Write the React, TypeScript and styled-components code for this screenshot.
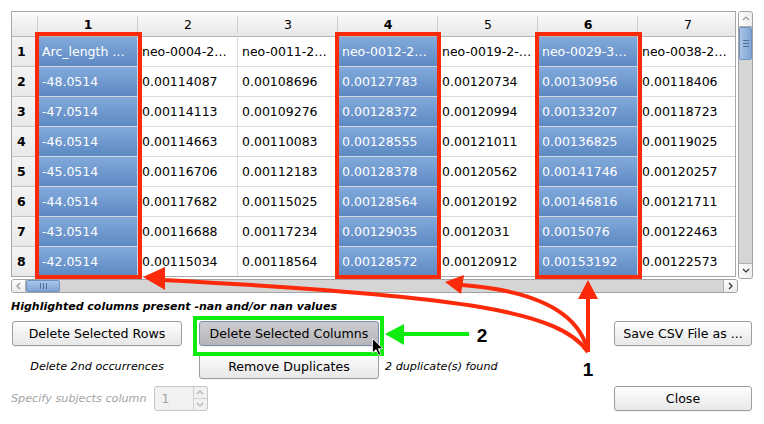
import React from "react";
import styled, { createGlobalStyle, css } from "styled-components";

const GlobalStyle = createGlobalStyle`
  html, body { margin: 0; padding: 0; background: #ffffff; }
  body { font-family: "DejaVu Sans", "Noto Sans", sans-serif; }
  * { box-sizing: border-box; }
`;

const Page = styled.div`
  position: relative;
  width: 764px;
  height: 424px;
  padding: 11px 0 0 11px;
  overflow: hidden;
  background: #ffffff;
  color: #000;
`;

const TableRow = styled.div`
  display: flex;
  align-items: flex-start;
  gap: 2px;
`;

const TableFrame = styled.div`
  width: 725px;
  height: 266px;
  border: 1px solid #a8a8a8;
  overflow: hidden;
  background: #fff;
`;

const Grid = styled.div`
  display: grid;
  grid-template-columns: 26px repeat(7, 100px);
  grid-template-rows: 25px repeat(8, 30px);
  width: 726px;
`;

const HeaderCell = styled.div<{ $bold?: boolean }>`
  position: relative;
  display: flex;
  align-items: center;
  justify-content: center;
  background: linear-gradient(#fbfbfb, #e7e7e7);
  border-bottom: 1px solid #b6b6b6;
  font-size: 12.5px;
  font-weight: ${(p) => (p.$bold ? 700 : 400)};
  &::after {
    content: "";
    position: absolute;
    right: 0;
    top: 4px;
    bottom: 3px;
    width: 1px;
    background: #cdcdcd;
  }
`;

const RowHead = styled.div`
  display: flex;
  align-items: center;
  padding-left: 5px;
  background: linear-gradient(#f3f3f3, #e9e9e9);
  border-bottom: 1px solid #c4c4c4;
  border-right: 1px solid #b6b6b6;
  font-size: 12.5px;
  font-weight: 700;
`;

const Cell = styled.div<{ $sel?: boolean }>`
  display: flex;
  align-items: center;
  padding: 0 4px;
  white-space: nowrap;
  overflow: hidden;
  font-size: 12.5px;
  color: #000;
  border-right: 1px solid #dcdcdc;
  border-bottom: 1px solid #dcdcdc;
  ${(p) =>
    p.$sel &&
    css`
      background: linear-gradient(#82aadb, #5d88c2);
      color: #ffffff;
      border-bottom-color: #cfd6e0;
      border-right-color: #cfd6e0;
    `}
`;

const VScroll = styled.div`
  width: 15px;
  height: 268px;
  display: flex;
  flex-direction: column;
  border: 1px solid #a3a3a3;
  border-radius: 3px;
  background: #d5d5d5;
  overflow: hidden;
`;

const HScroll = styled.div`
  width: 727px;
  height: 14px;
  display: flex;
  border: 1px solid #a3a3a3;
  border-radius: 3px;
  background: #d5d5d5;
  overflow: hidden;
`;

const ArrowBtn = styled.div<{ $horizontal?: boolean; $end?: boolean }>`
  flex: 0 0 ${(p) => (p.$horizontal ? "14px" : "15px")};
  display: flex;
  align-items: center;
  justify-content: center;
  background: ${(p) =>
    p.$horizontal ? "linear-gradient(#fdfdfd, #ececec)" : "linear-gradient(to right, #fdfdfd, #ececec)"};
  ${(p) =>
    p.$horizontal
      ? p.$end
        ? "border-left: 1px solid #b0b0b0;"
        : "border-right: 1px solid #b0b0b0;"
      : p.$end
      ? "border-top: 1px solid #b0b0b0;"
      : "border-bottom: 1px solid #b0b0b0;"}
`;

const Thumb = styled.div<{ $horizontal?: boolean }>`
  flex: 0 0 ${(p) => (p.$horizontal ? "34px" : "33px")};
  display: flex;
  flex-direction: ${(p) => (p.$horizontal ? "row" : "column")};
  align-items: center;
  justify-content: center;
  gap: 2px;
  background: ${(p) =>
    p.$horizontal ? "linear-gradient(#a9c4e7, #7ea4d5)" : "linear-gradient(to right, #a9c4e7, #7ea4d5)"};
  border: 1px solid #7093c2;
  border-radius: 2px;
`;

const Grip = styled.span<{ $horizontal?: boolean }>`
  display: block;
  background: #4f6f9c;
  width: ${(p) => (p.$horizontal ? "1px" : "6px")};
  height: ${(p) => (p.$horizontal ? "6px" : "1px")};
`;

const Track = styled.div`
  flex: 1;
`;

const Note = styled.div`
  margin-top: 7px;
  height: 14px;
  line-height: 14px;
  font-size: 11px;
  font-weight: 700;
  font-style: italic;
  white-space: nowrap;
`;

const Controls = styled.div`
  margin-top: 7px;
  padding-left: 1px;
  display: grid;
  grid-template-columns: 170px 17px 180px 1fr 138px;
  grid-template-rows: 25px 26px 25px;
  row-gap: 7px;
  width: 741px;
`;

const Button = styled.button<{ $pressed?: boolean; $col: number; $row: number }>`
  grid-column: ${(p) => p.$col};
  grid-row: ${(p) => p.$row};
  display: flex;
  align-items: center;
  justify-content: center;
  padding: 0;
  font-family: inherit;
  font-size: 12.6px;
  color: #000;
  border: 1px solid #9d9d9d;
  border-radius: 3px;
  background: linear-gradient(#fefefe, #e7e7e7);
  box-shadow: 0 1px 0 rgba(0, 0, 0, 0.06);
  ${(p) =>
    p.$pressed &&
    css`
      background: linear-gradient(#cdcdd1, #b6b6ba);
      border-color: #7b8eae;
    `}
`;

const InfoText = styled.div<{ $col: number; $row: number; $align?: string; $pad?: number }>`
  grid-column: ${(p) => p.$col};
  grid-row: ${(p) => p.$row};
  display: flex;
  align-items: center;
  justify-content: ${(p) => p.$align || "flex-start"};
  padding-left: ${(p) => p.$pad || 0}px;
  font-size: 11.2px;
  font-style: italic;
  white-space: nowrap;
`;

const SubjectRow = styled.div`
  grid-column: 1 / 4;
  grid-row: 3;
  display: flex;
  align-items: center;
  gap: 7px;
  margin-left: -1px;
`;

const DisabledLabel = styled.span`
  font-size: 11.2px;
  font-style: italic;
  color: #a3a3a3;
  white-space: nowrap;
`;

const SpinBox = styled.div`
  width: 54px;
  height: 25px;
  display: flex;
  border: 1px solid #c6c6c6;
  border-radius: 3px;
  background: #f1f1f1;
`;

const SpinValue = styled.div`
  flex: 1;
  display: flex;
  align-items: center;
  padding-left: 7px;
  font-size: 12.5px;
  color: #a6a6a6;
`;

const SpinButtons = styled.div`
  width: 14px;
  display: flex;
  flex-direction: column;
  border-left: 1px solid #d0d0d0;
`;

const SpinHalf = styled.div<{ $down?: boolean }>`
  flex: 1;
  display: flex;
  align-items: center;
  justify-content: center;
  ${(p) => p.$down && "border-top: 1px solid #d0d0d0;"}
`;

const Overlay = styled.svg`
  position: absolute;
  left: 0;
  top: 0;
  pointer-events: none;
`;

const Chevron = ({ dir, color = "#555" }: { dir: "up" | "down" | "left" | "right"; color?: string }) => {
  const pts: Record<string, string> = {
    up: "1,5 4,2 7,5",
    down: "1,2 4,5 7,2",
    left: "5,1 2,4 5,7",
    right: "2,1 5,4 2,7",
  };
  return (
    <svg width="8" height="8" viewBox="0 0 8 8">
      <polyline points={pts[dir]} fill="none" stroke={color} strokeWidth="1.2" />
    </svg>
  );
};

const headers = [1, 2, 3, 4, 5, 6, 7];
const selected = new Set([1, 4, 6]);

const rows: string[][] = [
  ["Arc_length …", "neo-0004-2…", "neo-0011-2…", "neo-0012-2…", "neo-0019-2-…", "neo-0029-3…", "neo-0038-2…"],
  ["-48.0514", "0.00114087", "0.00108696", "0.00127783", "0.00120734", "0.00130956", "0.00118406"],
  ["-47.0514", "0.00114113", "0.00109276", "0.00128372", "0.00120994", "0.00133207", "0.00118723"],
  ["-46.0514", "0.00114663", "0.00110083", "0.00128555", "0.00121011", "0.00136825", "0.00119025"],
  ["-45.0514", "0.00116706", "0.00112183", "0.00128378", "0.00120562", "0.00141746", "0.00120257"],
  ["-44.0514", "0.00117682", "0.00115025", "0.00128564", "0.00120192", "0.00146816", "0.00121711"],
  ["-43.0514", "0.00116688", "0.00117234", "0.00129035", "0.0012031", "0.0015076", "0.00122463"],
  ["-42.0514", "0.00115034", "0.00118564", "0.00128572", "0.00120912", "0.00153192", "0.00122573"],
];

const RED = "#fc2a08";
const GREEN = "#10ec10";

export default function App() {
  return (
    <Page>
      <GlobalStyle />
      <TableRow>
        <TableFrame>
          <Grid>
            <HeaderCell />
            {headers.map((h) => (
              <HeaderCell key={h} $bold={selected.has(h)}>
                {h}
              </HeaderCell>
            ))}
            {rows.map((r, ri) => (
              <React.Fragment key={ri}>
                <RowHead>{ri + 1}</RowHead>
                {r.map((v, ci) => (
                  <Cell key={ci} $sel={selected.has(ci + 1)}>
                    {v}
                  </Cell>
                ))}
              </React.Fragment>
            ))}
          </Grid>
        </TableFrame>
        <VScroll>
          <ArrowBtn>
            <Chevron dir="up" color="#9a9a9a" />
          </ArrowBtn>
          <Thumb>
            <Grip />
            <Grip />
            <Grip />
          </Thumb>
          <Track />
          <ArrowBtn $end>
            <Chevron dir="down" color="#333" />
          </ArrowBtn>
        </VScroll>
      </TableRow>
      <HScroll>
        <ArrowBtn $horizontal>
          <Chevron dir="left" color="#9a9a9a" />
        </ArrowBtn>
        <Thumb $horizontal>
          <Grip $horizontal />
          <Grip $horizontal />
          <Grip $horizontal />
        </Thumb>
        <Track />
        <ArrowBtn $horizontal $end>
          <Chevron dir="right" color="#333" />
        </ArrowBtn>
      </HScroll>
      <Note>Highlighted columns present -nan and/or nan values</Note>
      <Controls>
        <Button $col={1} $row={1}>Delete Selected Rows</Button>
        <Button $col={3} $row={1} $pressed>
          Delete Selected Columns
        </Button>
        <Button $col={5} $row={1}>Save CSV File as ...</Button>
        <InfoText $col={1} $row={2} $align="center">
          Delete 2nd occurrences
        </InfoText>
        <Button $col={3} $row={2}>Remove Duplicates</Button>
        <InfoText $col={4} $row={2} $pad={6}>
          2 duplicate(s) found
        </InfoText>
        <SubjectRow>
          <DisabledLabel>Specify subjects column</DisabledLabel>
          <SpinBox>
            <SpinValue>1</SpinValue>
            <SpinButtons>
              <SpinHalf>
                <Chevron dir="up" color="#b0b0b0" />
              </SpinHalf>
              <SpinHalf $down>
                <Chevron dir="down" color="#b0b0b0" />
              </SpinHalf>
            </SpinButtons>
          </SpinBox>
        </SubjectRow>
        <Button $col={5} $row={3}>Close</Button>
      </Controls>

      <Overlay width="764" height="424" viewBox="0 0 764 424">
        <rect x="37" y="34" width="103" height="243" fill="none" stroke={RED} strokeWidth="4" />
        <rect x="337" y="34" width="102" height="243" fill="none" stroke={RED} strokeWidth="4" />
        <rect x="537" y="34" width="103" height="243" fill="none" stroke={RED} strokeWidth="4" />
        <rect x="195" y="318" width="187" height="36" fill="none" stroke={GREEN} strokeWidth="4" />

        <line x1="588" y1="352" x2="588" y2="296" stroke={RED} strokeWidth="4" />
        <polygon points="588,280 578,299 598,299" fill={RED} />
        <path d="M 588 352 C 580 315, 540 291, 462 285" fill="none" stroke={RED} strokeWidth="4" />
        <polygon points="445,282 464,275 461,294" fill={RED} />
        <path d="M 588 352 C 560 312, 470 296, 163 280" fill="none" stroke={RED} strokeWidth="4" />
        <polygon points="143,277 165,267 165,290" fill={RED} />

        <line x1="402" y1="334" x2="469" y2="334" stroke={GREEN} strokeWidth="4" />
        <polygon points="385,334 404,324 404,345" fill={GREEN} />

        <text x="482" y="342" textAnchor="middle" fontFamily="Liberation Sans, Arial, sans-serif" fontWeight="700" fontSize="19" fill="#000">
          2
        </text>
        <text x="588" y="376" textAnchor="middle" fontFamily="Liberation Sans, Arial, sans-serif" fontWeight="700" fontSize="19" fill="#000">
          1
        </text>

        <path
          d="M372.5 338.5 L372.5 353 L376 349.6 L378.6 355.2 L380.8 354.2 L378.3 348.7 L383 348.7 Z"
          fill="#000"
          stroke="#fff"
          strokeWidth="0.8"
        />
      </Overlay>
    </Page>
  );
}
